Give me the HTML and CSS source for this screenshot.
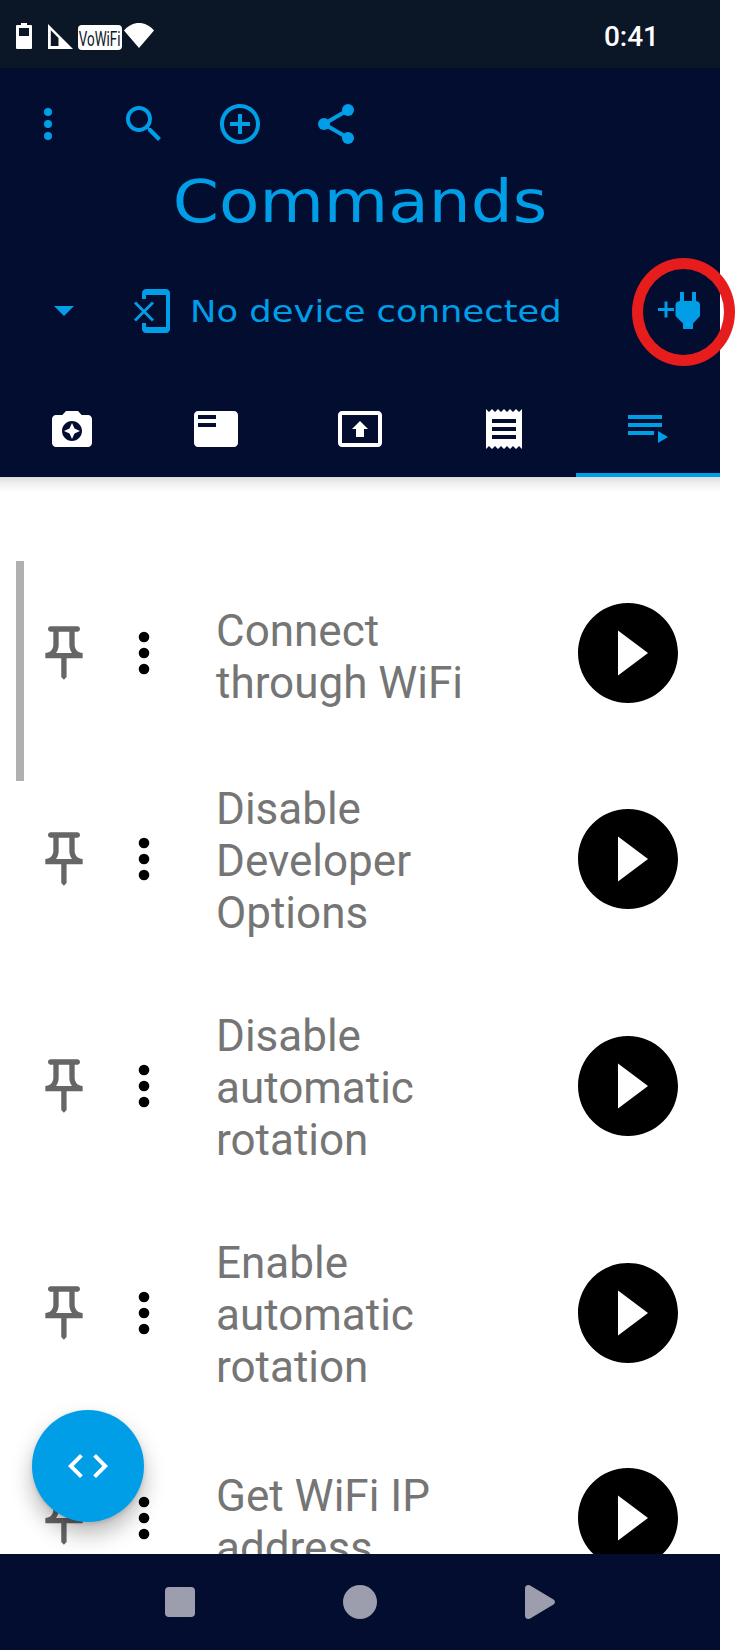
FILE: index.html
```html
<!DOCTYPE html>
<html lang="en">
<head>
  <meta charset="UTF-8">
  <title>Commands</title>
  <link rel="stylesheet" href="styles.css">
</head>
<body>
  <!-- shared icons -->
  <svg class="defs" width="0" height="0">
    <symbol id="pin" viewBox="0 0 24 24"><path d="M14 4v5c0 1.12.37 2.16 1 3H9c.65-.86 1-1.9 1-3V4h4m3-2H7c-.55 0-1 .45-1 1s.45 1 1 1h1v5c0 1.66-1.34 3-3 3v2h5.97v7l1 1 1-1v-7H19v-2c-1.66 0-3-1.34-3-3V4h1c.55 0 1-.45 1-1s-.45-1-1-1z"/></symbol>
    <symbol id="more" viewBox="0 0 24 24"><circle cx="12" cy="6" r="2"/><circle cx="12" cy="12" r="2"/><circle cx="12" cy="18" r="2"/></symbol>
    <symbol id="play" viewBox="0 0 24 24"><path d="M12 2C6.48 2 2 6.48 2 12s4.48 10 10 10 10-4.48 10-10S17.52 2 12 2zm-2 14.5v-9l6 4.5-6 4.5z"/></symbol>
  </svg>

  <div class="phone">
    <div class="status">
      <svg class="battery" width="16" height="26" viewBox="0 0 16 26"><path fill-rule="evenodd" d="M5 0h6v2h4a1 1 0 0 1 1 1v22a1 1 0 0 1-1 1H1a1 1 0 0 1-1-1V3a1 1 0 0 1 1-1h4zM3 5v8h10V5z"/></svg>
      <svg class="signal" width="25" height="25" viewBox="0 0 25 25"><path fill-rule="evenodd" d="M0 0l25 25H0zM2.800 6.300V22H10.500V14z"/></svg>
      <span class="vowifi"><span>VoWiFi</span></span>
      <svg class="wifi" width="30" height="25" viewBox="0 0 30 25"><path d="M0 7.500C4.200 2.500 9.500 0 15 0s10.800 2.500 15 7.500L15 25z"/></svg>
      <span class="clock">0:41</span>
    </div>

    <header>
      <div class="actions">
        <svg class="icon"><use href="#more"/></svg>
        <svg class="icon" viewBox="0 0 24 24"><path d="M15.500 14h-.79l-.28-.27A6.471 6.471 0 0 0 16 9.500 6.500 6.500 0 1 0 9.500 16c1.610 0 3.090-.59 4.230-1.570l.27.28v.79l5 4.990L20.490 19l-4.990-5zm-6 0C7.010 14 5 11.990 5 9.500S7.010 5 9.500 5 14 7.010 14 9.500 11.990 14 9.500 14z"/></svg>
        <svg class="icon" viewBox="0 0 24 24"><path d="M13 7h-2v4H7v2h4v4h2v-4h4v-2h-4V7zm-1-5C6.480 2 2 6.480 2 12s4.480 10 10 10 10-4.480 10-10S17.520 2 12 2zm0 18c-4.410 0-8-3.590-8-8s3.590-8 8-8 8 3.590 8 8-3.590 8-8 8z"/></svg>
        <svg class="icon" viewBox="0 0 24 24"><path d="M6 12L18 5M6 12l12 7" fill="none" stroke="currentColor" stroke-width="2"/><circle cx="6" cy="12" r="3"/><circle cx="18" cy="5" r="3"/><circle cx="18" cy="19" r="3"/></svg>
      </div>
      <h1>Commands</h1>
      <div class="device">
        <svg class="icon arrow" viewBox="0 0 24 24"><path d="M7 10l5 5 5-5z"/></svg>
        <svg class="icon erase" viewBox="0 0 24 24"><path d="M13 8.200l-1-1-4 4-4-4-1 1 4 4-4 4 1 1 4-4 4 4 1-1-4-4 4-4zM19 1H9c-1.100 0-2 .9-2 2v3h2V4h10v16H9v-2H7v3c0 1.100.9 2 2 2h10c1.100 0 2-.9 2-2V3c0-1.100-.9-2-2-2z"/></svg>
        <span class="device-name">No device connected</span>
        <div class="connect">
          <svg width="44" height="38" viewBox="0 0 44 38"><path d="M8 9.500v16M0 17.500h16" fill="none" stroke="currentColor" stroke-width="3"/><path d="M22 0h4v9h8V0h4v9q4 .5 4 4v11l-7 7.500V37H25v-5.500L17.500 24V13q0-3.500 4.500-4z"/></svg>
          <span class="ring"></span>
        </div>
      </div>
      <nav class="tabs">
        <a><svg class="icon" viewBox="0 0 24 24"><path d="M9 3L7.170 5H4c-1.100 0-2 .9-2 2v12c0 1.100.9 2 2 2h16c1.100 0 2-.9 2-2V7c0-1.100-.9-2-2-2h-3.170L15 3H9zm3 15c-2.760 0-5-2.240-5-5s2.240-5 5-5 5 2.240 5 5-2.240 5-5 5z"/><path d="M12 17l1.250-2.750L16 13l-2.750-1.250L12 9l-1.250 2.750L8 13l2.750 1.250z"/></svg></a>
        <a><svg class="icon" viewBox="0 0 24 24"><path d="M21 3H3c-1.100 0-2 .9-2 2v14c0 1.100.9 2 2 2h18c1.100 0 2-.9 2-2V5c0-1.100-.9-2-2-2zm-9 8H3V9h9v2zm0-4H3V5h9v2z"/></svg></a>
        <a><svg class="icon" viewBox="0 0 24 24"><path d="M21 3H3c-1.110 0-2 .89-2 2v14c0 1.110.89 2 2 2h18c1.110 0 2-.89 2-2V5c0-1.110-.89-2-2-2zm0 16.020H3V4.980h18v14.040zM10 12H8l4-4 4 4h-2v4h-4v-4z"/></svg></a>
        <a><svg class="icon" viewBox="0 0 24 24"><path d="M18 17H6v-2h12v2zm0-4H6v-2h12v2zm0-4H6V7h12v2zM3 22l1.500-1.500L6 22l1.500-1.500L9 22l1.500-1.500L12 22l1.500-1.500L15 22l1.500-1.500L18 22l1.500-1.500L21 22V2l-1.500 1.500L18 2l-1.500 1.500L15 2l-1.500 1.500L12 2l-1.500 1.500L9 2 7.500 3.500 6 2 4.500 3.500 3 2v20z"/></svg></a>
        <a class="active"><svg class="icon" viewBox="0 0 24 24"><path d="M2 5h17v2H2zM2 9h17v2H2zM2 13h13v2H2zM17 13l5 3-5 3z"/></svg></a>
      </nav>
    </header>

    <main>
      <div class="row">
        <svg class="row-icon pin"><use href="#pin"/></svg>
        <svg class="row-icon"><use href="#more"/></svg>
        <p>Connect through WiFi</p>
        <svg class="play"><use href="#play"/></svg>
      </div>
      <div class="row tall">
        <svg class="row-icon pin"><use href="#pin"/></svg>
        <svg class="row-icon"><use href="#more"/></svg>
        <p>Disable Developer Options</p>
        <svg class="play"><use href="#play"/></svg>
      </div>
      <div class="row tall">
        <svg class="row-icon pin"><use href="#pin"/></svg>
        <svg class="row-icon"><use href="#more"/></svg>
        <p>Disable automatic rotation</p>
        <svg class="play"><use href="#play"/></svg>
      </div>
      <div class="row tall">
        <svg class="row-icon pin"><use href="#pin"/></svg>
        <svg class="row-icon"><use href="#more"/></svg>
        <p>Enable automatic rotation</p>
        <svg class="play"><use href="#play"/></svg>
      </div>
      <div class="row">
        <svg class="row-icon pin"><use href="#pin"/></svg>
        <svg class="row-icon"><use href="#more"/></svg>
        <p>Get WiFi IP address</p>
        <svg class="play"><use href="#play"/></svg>
      </div>
      <div class="scrollbar"></div>
      <div class="fab">
        <svg class="icon" viewBox="0 0 24 24"><path d="M9.400 16.600L4.800 12l4.600-4.600L8 6l-6 6 6 6 1.400-1.400zm5.200 0l4.600-4.600-4.600-4.600L16 6l6 6-6 6-1.400-1.400z"/></svg>
      </div>
    </main>

    <footer>
      <svg width="34" height="34"><rect x="2" y="2" width="30" height="30" rx="4"/></svg>
      <svg width="34" height="34"><circle cx="17" cy="17" r="17"/></svg>
      <svg width="34" height="34"><path d="M2 3.500Q2 0 5.500 0q1 0 2.500 1L30.500 14.500q3 2.500 0 5L8 33q-1.500 1-2.500 1Q2 34 2 30.500z"/></svg>
    </footer>
  </div>
</body>
</html>
```

FILE: styles.css
```css
* {
  box-sizing: border-box;
}
body {
  margin: 0;
  background: #fff;
  font-family: Roboto, sans-serif;
}
svg {
  display: block;
  flex: none;
  fill: currentColor;
}
.defs {
  position: absolute;
}
.phone {
  width: 720px;
  height: 1650px;
  display: flex;
  flex-direction: column;
}
.icon {
  width: 48px;
  height: 48px;
}

/* status bar */
.status {
  height: 68px;
  padding: 23px 61px 0 16px;
  display: flex;
  align-items: flex-start;
  background: #0b1626;
  color: #fff;
}
.signal {
  margin: 1px 5px 0 16px;
}
.vowifi {
  width: 44px;
  height: 25px;
  margin: 2px 2px 0 0;
  border-radius: 4px;
  background: #fff;
  color: #0b1626;
  font-size: 21px;
  line-height: 29px;
  display: flex;
  justify-content: center;
}
.vowifi span {
  transform: scaleX(0.64);
}
.clock {
  margin-left: auto;
  font-size: 28px;
  font-weight: 500;
  line-height: 27px;
}

/* header */
header {
  position: relative;
  height: 409px;
  padding-top: 32px;
  background: #030d30;
  color: #009ee6;
  display: flex;
  flex-direction: column;
}
.actions {
  display: flex;
  gap: 48px;
  padding-left: 24px;
}
h1 {
  margin: 16px 0 0;
  height: 74px;
  font-family: "DejaVu Sans", sans-serif;
  font-size: 58px;
  font-weight: 400;
  line-height: 76px;
  text-align: center;
  transform: scaleX(1.14);
}
.device {
  height: 144px;
  padding: 0 18px 0 40px;
  display: flex;
  align-items: center;
}
.erase {
  margin: 2px 14px 0 40px;
}
.device-name {
  margin-top: 2px;
  font-family: "DejaVu Sans", sans-serif;
  font-size: 31px;
  white-space: nowrap;
  transform: scaleX(1.14);
  transform-origin: left;
}
.connect {
  position: relative;
  margin: 1px 0 0 auto;
}
.ring {
  position: absolute;
  left: -26px;
  top: -34px;
  width: 103px;
  height: 108px;
  border: 11px solid #e71d1d;
  border-radius: 50%;
}
.tabs {
  flex: 1;
  display: grid;
  grid-template-columns: repeat(5, 1fr);
  color: #fff;
}
.tabs a {
  display: flex;
  justify-content: center;
  padding-top: 23px;
}
.tabs .active {
  color: #009ee6;
  border-bottom: 4px solid #009ee6;
}

/* command list */
main {
  position: relative;
  height: 1077px;
  padding-top: 84px;
  overflow: hidden;
  background: linear-gradient(#dcdcdc, #f2f2f2 7px, #fff 16px);
}
.row {
  height: 184px;
  padding: 0 32px;
  display: flex;
  align-items: center;
  color: #000;
}
.tall {
  height: 227px;
}
.row-icon {
  width: 64px;
  height: 64px;
  margin-right: 40px;
}
.pin {
  margin-right: 16px;
  color: #666;
}
.row p {
  flex: 1;
  margin: 7px 72px 0 0;
  color: #757575;
  font-size: 44px;
  line-height: 52px;
}
.tall p {
  margin-top: 5px;
}
.play {
  width: 120px;
  height: 120px;
}
.scrollbar {
  position: absolute;
  left: 16px;
  top: 84px;
  width: 8px;
  height: 220px;
  background: #b0b0b0;
}
.fab {
  position: absolute;
  left: 32px;
  bottom: 32px;
  width: 112px;
  height: 112px;
  border-radius: 50%;
  background: #009ee6;
  color: #fff;
  box-shadow: 0 12px 22px rgba(0, 0, 0, 0.28), 0 2px 4px rgba(0, 0, 0, 0.12);
  display: flex;
  align-items: center;
  justify-content: center;
}

header {
  z-index: 1;
}

/* navigation bar */
footer {
  height: 96px;
  padding-top: 31px;
  display: flex;
  justify-content: center;
  gap: 146px;
  background: #030d30;
  color: #9c9eae;
}
```
